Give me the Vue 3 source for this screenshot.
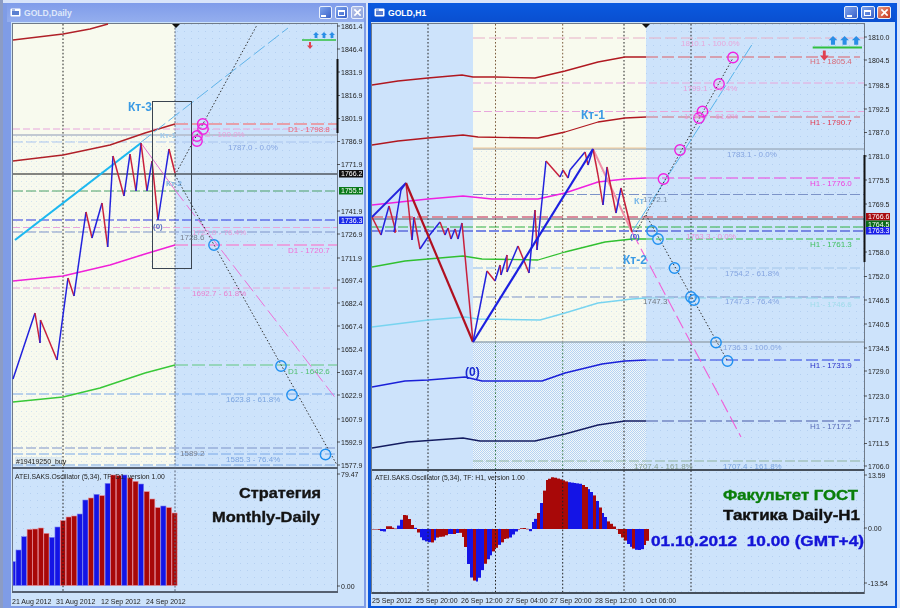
<template>
  <div class="desktop">
    <section
      v-for="chart in charts"
      :key="chart.id"
      class="window"
      :class="chart.id"
    >
      <header class="titlebar">
        <svg class="app-icon" viewBox="0 0 11 11" aria-hidden="true">
          <rect x="0.5" y="1.5" width="10" height="8" rx="1" fill="#fff" />
          <rect x="2" y="4" width="7" height="4" fill="#5a7fd0" />
          <rect x="2" y="2.5" width="3" height="1" fill="#5a7fd0" />
        </svg>
        <span class="title">{{ chart.title }}</span>
        <div class="buttons">
          <span class="btn"><i class="min"></i></span>
          <span class="btn"><i class="max"></i></span>
          <span class="btn close">
            <svg viewBox="0 0 10 10" aria-hidden="true">
              <path d="M1.5 1.5 8.5 8.5M8.5 1.5 1.5 8.5" stroke="#fff" stroke-width="1.8" />
            </svg>
          </span>
        </div>
      </header>

      <svg class="chart" :viewBox="chart.viewBox">
        <defs>
          <pattern :id="chart.id + '-dots'" width="5" height="5" patternUnits="userSpaceOnUse">
            <rect x="1" y="1" width="1" height="1" fill="#a8c8f0" opacity="0.45" />
            <rect x="3.5" y="3.5" width="1" height="1" fill="#a8c8f0" opacity="0.3" />
          </pattern>
          <pattern :id="chart.id + '-fine'" width="7" height="7" patternUnits="userSpaceOnUse">
            <rect x="2" y="3" width="1" height="1" fill="#9dbde8" opacity="0.5" />
          </pattern>
          <pattern :id="chart.id + '-dither'" width="2" height="2" patternUnits="userSpaceOnUse">
            <rect width="2" height="2" fill="#f4f8f8" />
            <rect width="1" height="1" fill="#b4d2f4" />
            <rect x="1" y="1" width="1" height="1" fill="#b4d2f4" />
          </pattern>
        </defs>

        <rect
          v-for="(r, i) in chart.panels"
          :key="'p' + i"
          :x="r.x"
          :y="r.y"
          :width="r.w"
          :height="r.h"
          :fill="r.fill ?? `url(#${chart.id}-${r.pattern})`"
        />

        <!-- indicator -->
        <rect
          v-for="(b, i) in chart.bars"
          :key="'b' + i"
          :x="b.x"
          :y="b.y"
          :width="b.w"
          :height="b.h"
          :fill="b.up ? '#1414e6' : '#a80808'"
          :stroke="b.edge ? (b.up ? '#7a84f0' : '#e88c98') : 'none'"
          stroke-width="0.6"
        />

        <polyline
          v-for="(l, i) in chart.lines"
          :key="'l' + i"
          :points="l.pts"
          fill="none"
          :stroke="l.c"
          :stroke-width="l.w ?? 1"
          :stroke-dasharray="l.d"
          stroke-linejoin="round"
        />

        <circle
          v-for="(c, i) in chart.circles"
          :key="'c' + i"
          :cx="c[0]"
          :cy="c[1]"
          r="5.2"
          fill="none"
          :stroke="c[2]"
          stroke-width="1.4"
        />

        <rect
          v-if="chart.frame"
          :x="chart.frame.x"
          :y="chart.frame.y"
          :width="chart.frame.w"
          :height="chart.frame.h"
          fill="none"
          stroke="#3a4450"
        />

        <text
          v-for="(t, i) in chart.labels"
          :key="'t' + i"
          :x="t[0]"
          :y="t[1]"
          :fill="t[3]"
          class="label"
        >{{ t[2] }}</text>

        <text
          v-for="(t, i) in chart.marks"
          :key="'m' + i"
          :x="t[0]"
          :y="t[1]"
          :fill="t[3]"
          :font-size="t[4]"
          class="mark"
        >{{ t[2] }}</text>

        <text
          v-for="(t, i) in chart.banners"
          :key="'h' + i"
          :x="t.x"
          :y="t.y"
          :fill="t.c"
          :stroke="t.c"
          :textLength="t.len"
          lengthAdjust="spacingAndGlyphs"
          class="banner"
        >{{ t.text }}</text>

        <text :x="chart.captionX" :y="chart.captionY" class="caption">{{ chart.caption }}</text>
        <text :x="chart.noteX" :y="chart.noteY" class="note">{{ chart.note }}</text>

        <!-- trade arrows -->
        <g :transform="chart.arrowsAt">
          <path
            v-for="ax in [0, 8, 16]"
            :key="ax"
            :transform="`translate(${ax} 0)`"
            d="M0 0 3 3H1.4V6H-1.4V3H-3Z"
            fill="#2a8ee6"
          />
          <path d="M-14 8H20" stroke="#30c040" stroke-width="1.4" />
          <path d="M-7 10H-5V13.5H-3L-6 17-9 13.5H-7Z" fill="#e04050" />
        </g>

        <polygon :points="chart.marker" fill="#111" />

        <!-- price axis -->
        <g class="axis">
          <template v-for="(a, i) in chart.axis" :key="'a' + i">
            <line :x1="chart.axisX" :x2="chart.axisX + 3" :y1="a[1]" :y2="a[1]" stroke="#333" stroke-width="0.8" />
            <text :x="chart.axisX + 4" :y="a[1] + 2.5" class="tick">{{ a[0] }}</text>
          </template>
          <template v-for="(a, i) in chart.tags" :key="'g' + i">
            <rect :x="chart.axisX + 2" :y="a[1] - 3.5" width="24" height="7.5" :fill="a[2]" />
            <text :x="chart.axisX + 4" :y="a[1] + 2.5" class="tick tag">{{ a[0] }}</text>
          </template>
          <rect :x="chart.axisX - 0.5" :y="chart.bar[0]" width="2" :height="chart.bar[1]" fill="#111" />
        </g>

        <!-- time axis -->
        <g>
          <text
            v-for="(t, i) in chart.times"
            :key="'d' + i"
            :x="t[0]"
            :y="chart.timeY"
            class="tick"
          >{{ t[1] }}</text>
        </g>
      </svg>
    </section>
  </div>
</template>

<script setup>
const PINK = "#e8a6dc";
const PALE = "#a9c4ee";
const GREY = "#7c93c8";

function h(y, x1, x2, c, w = 1, d = "10 3") {
  return { pts: `${x1},${y} ${x2},${y}`, c, w, d };
}
function v(x, y1, y2, c = "#222", d = "1.6 2") {
  return { pts: `${x},${y1} ${x},${y2}`, c, w: 1, d };
}
function path(pairs, c, w = 1.2, d) {
  return { pts: pairs.map((p) => p.join(",")).join(" "), c, w, d };
}
// zigzag: every leg gets the colour of its direction
function zigzag(points) {
  const out = [];
  for (let i = 1; i < points.length; i++) {
    const up = points[i][1] < points[i - 1][1];
    out.push(path([points[i - 1], points[i]], up ? "#2222dd" : "#c8203c", 1.5));
  }
  return out;
}

const dailyBars = [335, 300, 260, 238, 237, 234, 250, 262, 231, 212, 201, 198, 192, 150, 144, 133, 137, 100, 75, 77, 75, 84, 94, 102, 125, 147, 173, 168, 173, 189];
const dailyUp = [1, 1, 1, 0, 0, 0, 0, 1, 1, 0, 0, 0, 1, 1, 0, 1, 0, 1, 0, 0, 1, 0, 0, 1, 0, 0, 0, 1, 0, 0];

const daily = {
  id: "daily",
  title: "GOLD,Daily",
  viewBox: "11 22 353 584",
  axisX: 337,
  timeY: 604,
  bar: [59, 74],
  marker: "172,24 180,24 176,28",
  arrowsAt: "translate(316 32)",
  captionX: 15,
  captionY: 478.5,
  caption: "ATEI.SAKS.Oscillator (5,34), TF: D1, version 1.00",
  noteX: 16,
  noteY: 464,
  note: "#19419250_buy",
  frame: { x: 152.5, y: 101.5, w: 39, h: 167 },
  panels: [
    { x: 11, y: 22, w: 353, h: 584, fill: "#cde3fb" },
    { x: 13, y: 24, w: 162, h: 442, fill: "#f8faee" },
    { x: 13, y: 135, w: 162, h: 331, pattern: "dots" },
    { x: 175, y: 24, w: 162, h: 442, pattern: "fine" },
    { x: 15, y: 457, w: 47, h: 9, fill: "#dce9f0" },
    { x: 13, y: 470, w: 324, h: 121, pattern: "fine" },
    { x: 12, y: 23, w: 326, h: 1, fill: "#6f7a88" },
    { x: 12, y: 23, w: 1, h: 570, fill: "#6f7a88" },
    { x: 337, y: 23, w: 1, h: 570, fill: "#6f7a88" },
    { x: 12, y: 467, w: 326, h: 2, fill: "#556070" },
    { x: 12, y: 591, w: 326, h: 2, fill: "#556070" }
  ],
  bars: dailyBars.map((t, i) => {
    const x = Math.max(13, 10.4 + i * 5.57);
    const right = 10.4 + (i + 1) * 5.57;
    const y = 450 + t / 3;
    return { x, y, w: right - x - 0.4, h: 585.5 - y, up: dailyUp[i], edge: true };
  }),
  lines: [
    v(63, 24, 591),
    v(175, 24, 591, "#5a6478", "2 1.6"),
    h(129, 13, 337, PINK, 1, "7 3"),
    h(135, 13, 337, "#b0b8c8", 1.4, "none"),
    h(142, 13, 337, PALE, 1, "10 3"),
    h(174, 13, 337, "#111", 1, "none"),
    h(191, 13, 337, "#4aa068", 1.2),
    h(220, 13, 337, "#2a38e0", 1.1),
    h(227.5, 13, 337, PINK, 1, "7 3"),
    h(232, 13, 337, GREY, 1),
    h(288, 13, 337, PINK, 1, "7 3"),
    h(394, 13, 337, "#78a8e8", 1),
    h(448, 13, 337, GREY, 1),
    h(454, 13, 337, "#78a8e8", 1),
    h(465, 13, 337, "#78a8e8", 1),
    path([[13, 40], [63, 34], [90, 29], [108, 24]], "#b02028", 1.4),
    path([[13, 161], [63, 155], [110, 145], [145, 133], [175, 124]], "#b02028", 1.4),
    h(124, 175, 337, "#ee8a90", 1.6, "13 4"),
    path([[13, 281], [63, 276], [110, 265], [145, 254], [175, 245]], "#f020d8", 1.5),
    h(245, 175, 337, "#f090d8", 1.6, "13 4"),
    path([[13, 402], [63, 397], [100, 388], [145, 373], [175, 365]], "#38c838", 1.4),
    h(365, 175, 337, "#60c880", 1.1, "13 4"),
    path([[15, 240], [141, 143]], "#1cb8f0", 2.2),
    path([[141, 143], [175, 190]], "#e070d0", 1),
    path([[175, 190], [337, 400]], "#ee70d8", 1, "14 5"),
    path([[140, 143], [288, 28]], "#60b4ea", 1, "14 4"),
    path([[175, 175], [257, 25]], "#333", 1, "1.5 2"),
    path([[175, 175], [337, 465]], "#333", 1, "1.5 2"),
    ...zigzag([[13, 379], [35, 313], [40, 343], [40.5, 320], [57, 360], [68, 278], [74, 296], [86, 212], [92, 238], [102, 203], [107.7, 247], [113, 156], [124, 196], [130, 154], [136, 191], [141, 143], [147, 191], [152, 161], [158, 220], [169, 149], [175, 173]])
  ],
  circles: [
    [202.7, 124, "#f020e0"], [203, 129, "#f020e0"], [197, 136, "#f020e0"], [197, 141, "#f020e0"],
    [214, 245, "#2090f0"], [281, 366, "#2090f0"], [292, 395, "#2090f0"], [325.5, 454.5, "#2090f0"]
  ],
  labels: [
    [288, 132, "D1 - 1798.8", "#e86a78"],
    [206, 137, "2 - 100.0%", "#e8a0dc"],
    [228, 150, "1787.0 - 0.0%", "#84a4e0"],
    [192, 235, "1725.0 - 76.4%", "#e8a0dc"],
    [180, 240, "1728.6", "#7a8090"],
    [288, 253, "D1 - 1720.7", "#f070d8"],
    [192, 296, "1692.7 - 61.8%", "#e880d0"],
    [288, 374, "D1 - 1642.6", "#50c070"],
    [226, 402, "1623.8 - 61.8%", "#7aa4e0"],
    [180, 456, "1589.2", "#7a8090"],
    [226, 462, "1585.3 - 76.4%", "#7aa4e0"]
  ],
  marks: [
    [128, 111, "Кт-3", "#3a9ae4", 12],
    [160, 138, "Кт-1", "#9cc8ea", 8],
    [166, 186, "Кт-2", "#7ab0e0", 8],
    [153, 229, "(0)", "#5a70c0", 8]
  ],
  banners: [
    { x: 239, y: 498, text: "Стратегия", c: "#141414", len: 82 },
    { x: 212, y: 522, text: "Monthly-Daily", c: "#141414", len: 108 }
  ],
  axis: [
    ["1861.4", 26], ["1846.4", 49], ["1831.9", 72], ["1816.9", 95.5], ["1801.9", 118.5], ["1786.9", 141.5],
    ["1771.9", 164.5], ["1741.9", 211], ["1726.9", 234], ["1711.9", 258], ["1697.4", 280], ["1682.4", 303],
    ["1667.4", 326], ["1652.4", 349], ["1637.4", 372.5], ["1622.9", 395], ["1607.9", 419], ["1592.9", 442],
    ["1577.9", 465], ["79.47", 474], ["0.00", 586]
  ],
  tags: [
    ["1766.2", 173.5, "#111"],
    ["1755.5", 190.5, "#0a7a1a"],
    ["1736.3", 220, "#1a2ae8"]
  ],
  times: [
    [12, "21 Aug 2012"], [56, "31 Aug 2012"], [101, "12 Sep 2012"], [146, "24 Sep 2012"]
  ]
};

// envelope of the H1 oscillator, in reference x/y (zero line is y=529)
const envelope = [
  [372, 529], [377, 529.5], [380, 530], [383.5, 532.5], [386, 530], [388, 525], [392, 527], [395, 529], [398, 526.5], [401, 521],
  [403, 516], [406, 514], [409, 518], [413, 526], [417, 529], [420, 536], [423, 540], [428, 542], [433, 542.5], [438, 537],
  [445, 536.5], [448, 534], [455, 534], [460, 532], [463, 537], [467, 553], [470, 575], [473, 580], [477, 581.5], [480, 577],
  [484, 566], [490, 557], [493, 552], [498, 546], [502, 543], [505, 539], [510, 538], [515, 533], [518, 530], [522, 528],
  [527, 528], [530, 533], [533, 522], [537, 517], [540, 509], [543, 497], [547, 480], [553, 477], [560, 479], [568, 482],
  [582, 484], [588, 488], [595, 496], [598, 502], [603, 513], [608, 521], [613, 525], [617, 529], [620, 535], [625, 540],
  [632, 548], [637, 550], [642, 550], [648, 540]
];
const upRanges = [
  [380, 385], [398, 402], [413, 417], [421, 430], [433, 437], [447, 452], [455, 460], [468, 472], [475, 485], [488, 492],
  [497, 502], [508, 517], [528, 536], [539, 544], [568, 581], [589, 592], [597, 598], [603, 606], [612, 614], [627, 632], [634, 644]
];
function envelopeAt(x) {
  for (let i = 1; i < envelope.length; i++) {
    const [x0, y0] = envelope[i - 1];
    const [x1, y1] = envelope[i];
    if (x <= x1) return y0 + ((y1 - y0) * (x - x0)) / (x1 - x0);
  }
  return 529;
}
const h1Bars = [];
for (let i = 0; i < 99; i++) {
  const x = Math.round(372 + i * 2.8);
  const next = Math.round(372 + (i + 1) * 2.8);
  const mid = (x + next) / 2;
  const y = envelopeAt(mid);
  const up = upRanges.some(([a, b]) => mid >= a && mid <= b);
  h1Bars.push({ x, y: Math.min(y, 529), w: next - x, h: Math.max(Math.abs(y - 529), 0.5), up, edge: false });
}

const hourly = {
  id: "hourly",
  title: "GOLD,H1",
  viewBox: "371 22 524 584",
  axisX: 864,
  timeY: 602.5,
  bar: [155, 107],
  marker: "642,24 650,24 646,28",
  arrowsAt: "translate(833 36) scale(1.45)",
  captionX: 375,
  captionY: 479.5,
  caption: "ATEI.SAKS.Oscillator (5,34), TF: H1, version 1.00",
  noteX: 0,
  noteY: 0,
  note: "",
  panels: [
    { x: 371, y: 22, w: 524, h: 584, fill: "#cde3fb" },
    { x: 473, y: 24, w: 173, h: 318, fill: "#f8faee" },
    { x: 473, y: 149, w: 173, h: 193, pattern: "dots" },
    { x: 473, y: 342, w: 173, h: 127, pattern: "dither" },
    { x: 646, y: 24, w: 218, h: 445, pattern: "fine" },
    { x: 372, y: 472, w: 492, h: 120, pattern: "fine" },
    { x: 372, y: 23, w: 493, h: 1, fill: "#6f7a88" },
    { x: 371, y: 23, w: 1, h: 571, fill: "#6f7a88" },
    { x: 864, y: 23, w: 1, h: 571, fill: "#6f7a88" },
    { x: 372, y: 469, w: 492, h: 2, fill: "#46505c" },
    { x: 372, y: 592, w: 492, h: 2, fill: "#46505c" }
  ],
  bars: h1Bars,
  lines: [
    v(428, 24, 592),
    v(495.5, 24, 342, "#7a5a3a"),
    v(495.5, 342, 469, "#3a7a4a"),
    v(495.5, 472, 592),
    v(562.7, 24, 342, "#7a5a3a"),
    v(562.7, 342, 469, "#3a7a4a"),
    v(562.7, 472, 592),
    v(624, 24, 592),
    v(691, 24, 592),
    h(38, 473, 864, "#e8b0c8", 1.1, "12 4"),
    h(83, 473, 864, PINK, 1, "8 3"),
    h(111.5, 473, 864, PINK, 1, "8 3"),
    h(149, 473, 864, "#8a98a8", 1, "none"),
    h(148, 473, 646, "#f0c898", 1, "none"),
    h(194.5, 473, 864, GREY, 1),
    h(217, 372, 864, "#dc8c9c", 2, "11 4"),
    h(219, 372, 864, "#556", 1, "none"),
    h(227, 372, 864, "#30b040", 1),
    h(231, 372, 864, "#7888e4", 1.8),
    h(268, 473, 864, "#b0d0f0", 1.6),
    h(297, 473, 864, GREY, 1),
    h(342, 473, 864, "#98a8b4", 1.4, "none"),
    h(461, 473, 864, "#90b4a0", 1.2),
    path([[372, 85], [398, 81], [428, 78], [462, 75], [473, 77], [495, 77], [535, 78], [565, 71], [598, 62], [625, 57], [646, 57]], "#b01820", 1.3),
    h(57, 646, 860, "#d88a98", 1.3, "12 4"),
    path([[372, 145], [398, 141], [428, 138], [463, 135], [478, 137], [538, 138], [565, 132], [598, 122], [625, 118], [646, 117]], "#b01820", 1.3),
    h(117, 646, 860, "#d86c78", 1.1, "12 4"),
    path([[372, 205], [428, 199], [463, 196], [492, 199], [538, 199], [565, 193], [598, 182], [625, 179], [646, 178]], "#f020e0", 1.4),
    h(178, 646, 860, "#f040e0", 1.1, "12 4"),
    path([[372, 267], [405, 261], [428, 259], [463, 256], [482, 259], [538, 260], [565, 252], [605, 242], [632, 239], [646, 239]], "#30c030", 1.3),
    h(239, 646, 860, "#30c040", 1, "7 3"),
    path([[372, 327], [428, 320], [465, 317], [478, 319], [540, 320], [565, 313], [598, 303], [632, 299], [646, 298]], "#78d4f0", 1.4),
    h(298, 646, 860, "#90d8ea", 1.1, "12 4"),
    path([[372, 387], [405, 381], [428, 380], [465, 377], [482, 381], [542, 381], [565, 373], [602, 364], [625, 361], [646, 360]], "#1a20d8", 1.5),
    h(360, 646, 860, "#2a40e0", 1.1, "12 4"),
    path([[372, 448], [408, 442], [463, 438], [480, 441], [535, 441], [565, 434], [598, 425], [625, 421], [646, 421]], "#141c60", 1.3),
    h(421, 646, 860, "#7488c4", 1.4, "12 4"),
    path([[593, 149], [632, 232]], "#f090a8", 2),
    path([[632, 232], [741, 437]], "#f060d8", 1.1, "14 5"),
    path([[632, 232], [753, 43]], "#58b4ec", 1, "14 2"),
    path([[636, 232], [733, 58]], "#333", 1, "1.5 2"),
    path([[646, 215], [727, 360]], "#333", 1, "1.5 2"),
    ...zigzag([[372, 217], [381, 235], [389, 206], [396, 232], [394, 232], [401, 190], [406, 183], [412, 240], [414, 217], [420, 249], [428, 237], [440, 222], [445, 235], [448, 228], [451, 239], [455, 229], [458, 239], [462, 223], [473, 342], [487, 271], [495, 281], [500, 265], [501, 275], [507, 255], [507, 272], [518, 246], [529, 273], [535, 210], [537, 250], [546, 161], [560, 177], [563, 170], [568, 178], [570, 170], [585, 152], [588, 165], [593, 149], [598, 175], [603, 205], [607, 167], [616, 213], [621, 188], [632, 232]]),
    path([[372, 217], [406, 183]], "#2222dd", 1.8),
    path([[406, 183], [473, 342]], "#b01020", 2.2),
    path([[473, 342], [593, 149]], "#1c20e0", 2.2)
  ],
  circles: [
    [733, 57.5, "#f020e0"], [719, 84, "#f020e0"], [702.5, 111.5, "#f020e0"], [699, 118, "#f020e0"], [680, 150, "#f020e0"], [663.5, 179, "#f020e0"],
    [652, 231, "#2090f0"], [658, 239, "#2090f0"], [674.5, 268, "#2090f0"], [691, 297, "#2090f0"], [694, 300, "#2090f0"], [716, 342.5, "#2090f0"], [727.5, 361, "#2090f0"]
  ],
  labels: [
    [681, 46, "1810.1 - 100.0%", "#e8a8dc"],
    [810, 64, "H1 - 1805.4", "#d86a78"],
    [683, 91, "1799.1 - 76.4%", "#e8a0dc"],
    [684, 119, "1790.7 - 61.8%", "#e8a0dc"],
    [810, 125, "H1 - 1790.7", "#e03a50"],
    [727, 157, "1783.1 - 0.0%", "#84a4e0"],
    [810, 186, "H1 - 1776.0", "#f040e0"],
    [643, 202, "1772.1", "#7a8ea8"],
    [686, 239, "1763.3 - 0.0%", "#e890d8"],
    [810, 247, "H1 - 1761.3", "#40c060"],
    [725, 276, "1754.2 - 61.8%", "#84a4e0"],
    [643, 304, "1747.3", "#707880"],
    [725, 304, "1747.3 - 76.4%", "#84a4e0"],
    [810, 307, "H1 - 1746.6", "#a0dcea"],
    [723, 350, "1736.3 - 100.0%", "#84a4e0"],
    [810, 368, "H1 - 1731.9", "#2a30c8"],
    [810, 429, "H1 - 1717.2", "#5a6cb8"],
    [634, 468.5, "1707.4 - 161.8%", "#88a090"],
    [723, 468.5, "1707.4 - 161.8%", "#7aa4e0"]
  ],
  marks: [
    [581, 119, "Кт-1", "#3a9ae4", 12],
    [623, 264, "Кт-2", "#3a9ae4", 12],
    [634, 204, "Кт", "#7ab8e8", 9],
    [465, 376, "(0)", "#1a2ad0", 12],
    [630, 239, "(0)", "#3a60d0", 8]
  ],
  banners: [
    { x: 723, y: 500, text: "Факультет ГОСТ", c: "#0a7f0a", len: 135 },
    { x: 723, y: 520, text: "Тактика Daily-H1", c: "#111", len: 137 },
    { x: 651, y: 546, text: "01.10.2012  10.00 (GMT+4)", c: "#1414d8", len: 213 }
  ],
  axis: [
    ["1810.0", 37], ["1804.5", 60], ["1798.5", 85], ["1792.5", 109], ["1787.0", 132.5], ["1781.0", 156],
    ["1775.5", 180], ["1769.5", 204], ["1758.0", 252], ["1752.0", 276.5], ["1746.5", 300], ["1740.5", 324],
    ["1734.5", 348], ["1729.0", 371], ["1723.0", 396], ["1717.5", 419], ["1711.5", 443.5], ["1706.0", 466],
    ["13.59", 475], ["0.00", 528], ["-13.54", 583]
  ],
  tags: [
    ["1766.6", 216.5, "#a80c10"],
    ["1764.5", 224, "#0a6a18"],
    ["1763.3", 230.5, "#1a20e8"]
  ],
  times: [
    [372, "25 Sep 2012"], [416, "25 Sep 20:00"], [461, "26 Sep 12:00"], [506, "27 Sep 04:00"],
    [550, "27 Sep 20:00"], [595, "28 Sep 12:00"], [640, "1 Oct 06:00"]
  ]
};

const charts = [daily, hourly];
</script>

<style scoped>
.desktop {
  display: flex;
  gap: 2px;
  width: 900px;
  height: 608px;
  box-sizing: border-box;
  padding: 3px 3px 0;
  background: linear-gradient(90deg, #8c9cc4 3px, #d8e4fa 3px);
  font-family: "Liberation Sans", Arial, sans-serif;
}

.window {
  display: flex;
  flex-direction: column;
  box-sizing: border-box;
}

.window.daily {
  width: 363px;
  padding: 0 2px 0 8px;
  background: #7f9ce6;
}

.window.hourly {
  flex: 1;
  padding: 0 2px 2px 3px;
  background: #0a56dc;
}

.titlebar {
  display: flex;
  align-items: center;
  gap: 3px;
  height: 19px;
  flex: none;
  margin-left: -4px;
  color: #fff;
  font-size: 8.6px;
  font-weight: bold;
}

.daily .titlebar {
  color: #dfe8fa;
  background: linear-gradient(#7f9cea, #94aeee);
}

.hourly .titlebar {
  margin-left: 0;
  background: linear-gradient(#0a5ae0, #0a4fd0);
}

.app-icon {
  width: 11px;
  height: 11px;
  margin-left: 3px;
}

.buttons {
  display: flex;
  gap: 3px;
  margin-left: auto;
}

.hourly .buttons {
  gap: 2.5px;
  margin-right: 4px;
}

.btn {
  display: flex;
  align-items: center;
  justify-content: center;
  width: 13px;
  height: 13px;
  box-sizing: border-box;
  border: 1px solid #e8effc;
  border-radius: 2px;
  background: linear-gradient(135deg, #7ea4ee, #3a62c8);
}

.hourly .btn {
  width: 14px;
}

.btn.close {
  background: linear-gradient(135deg, #e89a80, #c8341c);
}

.daily .btn.close {
  background: linear-gradient(135deg, #b8c4e8, #8aa0dc);
}

.btn svg {
  width: 9px;
  height: 9px;
}

.min {
  width: 5px;
  height: 2px;
  margin: 6px 4px 0 0;
  background: #fff;
}

.max {
  width: 7px;
  height: 6px;
  box-sizing: border-box;
  border: 1px solid #fff;
  border-top-width: 2px;
}

.chart {
  display: block;
  width: 100%;
  height: 584px;
  filter: blur(0.3px);
}

.label {
  font-size: 8px;
}

.mark {
  font-weight: bold;
}

.banner {
  font-size: 14px;
  font-weight: bold;
  stroke-width: 0.35px;
  white-space: pre;
}

.caption {
  font-size: 6.8px;
  fill: #222;
}

.note {
  font-size: 7px;
  fill: #222;
}

.tick {
  font-size: 7px;
  fill: #222;
}

.tick.tag {
  fill: #fff;
}
</style>
